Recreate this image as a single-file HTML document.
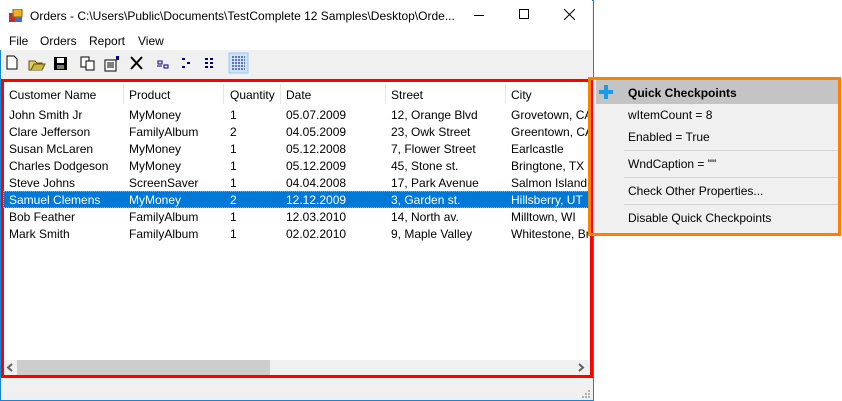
<!DOCTYPE html>
<html><head><style>
*{margin:0;padding:0;box-sizing:border-box}
body{width:842px;height:401px;background:#fff;font-family:"Liberation Sans",sans-serif;font-size:12px;color:#000;position:relative;overflow:hidden}
.abs{position:absolute}
.win{left:0;top:0;width:594px;height:401px;border:1px solid #1883d7;background:#f0f0f0}
.title{left:0;top:0;width:592px;height:50px;background:#fff}
.t{white-space:nowrap}
.row{position:absolute;left:3px;width:586px;height:17px}
.row span{position:absolute;top:2px;white-space:nowrap}
.sel{background:#0078d7;color:#fff;outline:1px dotted #e0a040;outline-offset:-1px}
</style></head><body>
<div class="abs win"></div>
<div class="abs title"></div>
<svg class="abs" style="left:9px;top:9px" width="14" height="14"><rect x="0" y="4" width="6" height="9" fill="#c03030"/><rect x="4" y="0" width="9" height="8" fill="#f0b020" stroke="#806010"/><rect x="6" y="8" width="7" height="5" fill="#4070d0"/></svg>
<div class="abs t" style="left:30px;top:9px">Orders - C:\Users\Public\Documents\TestComplete 12 Samples\Desktop\Orde...</div>
<div class="abs" style="left:474px;top:15px;width:10px;height:1px;background:#000"></div>
<div class="abs" style="left:519px;top:9px;width:10px;height:10px;border:1px solid #000"></div>
<svg class="abs" style="left:564px;top:9px" width="11" height="11"><path d="M0 0L11 11M11 0L0 11" stroke="#000"/></svg>
<div class="abs t" style="left:9px;top:34px">File</div>
<div class="abs t" style="left:40px;top:34px">Orders</div>
<div class="abs t" style="left:89px;top:34px">Report</div>
<div class="abs t" style="left:138px;top:34px">View</div>
<svg class="abs" style="left:0;top:52px" width="260" height="26">
<path d="M7 4h7l3 3v10H7z" fill="#fff" stroke="#000"/>
<path d="M29 9h6l2 2h5v7H29z" fill="#e0d060" stroke="#605010"/><path d="M31 18l3-6h11l-3 6" fill="#c8b840" stroke="#605010"/>
<rect x="54" y="5" width="13" height="13" fill="#000"/><rect x="57" y="6" width="7" height="5" fill="#fff"/><rect x="57" y="13" width="7" height="4" fill="#808060"/>
<rect x="81" y="5" width="8" height="10" fill="#fff" stroke="#000"/><rect x="86" y="9" width="8" height="9" fill="#fff" stroke="#000"/>
<rect x="105" y="8" width="11" height="11" fill="#fff" stroke="#000"/><path d="M107 11h7M107 13h7M107 15h7" stroke="#000"/><rect x="116" y="4" width="3" height="4" fill="#000080"/>
<path d="M131 5l11 12M142 5l-11 12" stroke="#000" stroke-width="2"/>
<path d="M158 9h4v3h-4zM164 13h4v3h-4z" fill="none" stroke="#000080"/><path d="M157 14h5" stroke="#000080"/>
<path d="M182 7h3M187 11h3M182 15h3" stroke="#000080" stroke-width="2"/>
<path d="M205 7h3M210 7h3M205 11h3M210 11h3M205 15h3M210 15h3" stroke="#000080" stroke-width="2"/>
<rect x="229" y="1" width="19" height="20" fill="#cce4f7" stroke="#99c9ef"/>
<path d="M232 5h13M232 8h13M232 11h13M232 14h13M232 17h13" stroke="#000080" stroke-dasharray="2 1"/>
</svg>
<div class="abs" style="left:1px;top:79px;width:592px;height:299px;border:3px solid #f00;background:#fff"></div>
<div class="abs" style="left:123px;top:84px;width:1px;height:20px;background:#e5e5e5"></div>
<div class="abs" style="left:223px;top:84px;width:1px;height:20px;background:#e5e5e5"></div>
<div class="abs" style="left:280px;top:84px;width:1px;height:20px;background:#e5e5e5"></div>
<div class="abs" style="left:385px;top:84px;width:1px;height:20px;background:#e5e5e5"></div>
<div class="abs" style="left:505px;top:84px;width:1px;height:20px;background:#e5e5e5"></div>
<div class="row" style="top:86px"><span style="left:6px">Customer Name</span><span style="left:126px">Product</span><span style="left:227px">Quantity</span><span style="left:283px">Date</span><span style="left:388px">Street</span><span style="left:508px">City</span></div>
<div class="row" style="top:106px"><span style="left:6px">John Smith Jr</span><span style="left:126px">MyMoney</span><span style="left:227px">1</span><span style="left:283px">05.07.2009</span><span style="left:388px">12, Orange Blvd</span><span style="left:508px">Grovetown, CA</span></div>
<div class="row" style="top:123px"><span style="left:6px">Clare Jefferson</span><span style="left:126px">FamilyAlbum</span><span style="left:227px">2</span><span style="left:283px">04.05.2009</span><span style="left:388px">23, Owk Street</span><span style="left:508px">Greentown, CA</span></div>
<div class="row" style="top:140px"><span style="left:6px">Susan McLaren</span><span style="left:126px">MyMoney</span><span style="left:227px">1</span><span style="left:283px">05.12.2008</span><span style="left:388px">7, Flower Street</span><span style="left:508px">Earlcastle</span></div>
<div class="row" style="top:157px"><span style="left:6px">Charles Dodgeson</span><span style="left:126px">MyMoney</span><span style="left:227px">1</span><span style="left:283px">05.12.2009</span><span style="left:388px">45, Stone st.</span><span style="left:508px">Bringtone, TX</span></div>
<div class="row" style="top:174px"><span style="left:6px">Steve Johns</span><span style="left:126px">ScreenSaver</span><span style="left:227px">1</span><span style="left:283px">04.04.2008</span><span style="left:388px">17, Park Avenue</span><span style="left:508px">Salmon Island</span></div>
<div class="row sel" style="top:191px"><span style="left:6px">Samuel Clemens</span><span style="left:126px">MyMoney</span><span style="left:227px">2</span><span style="left:283px">12.12.2009</span><span style="left:388px">3, Garden st.</span><span style="left:508px">Hillsberry, UT</span></div>
<div class="row" style="top:208px"><span style="left:6px">Bob Feather</span><span style="left:126px">FamilyAlbum</span><span style="left:227px">1</span><span style="left:283px">12.03.2010</span><span style="left:388px">14, North av.</span><span style="left:508px">Milltown, WI</span></div>
<div class="row" style="top:225px;overflow:hidden"><span style="left:6px">Mark Smith</span><span style="left:126px">FamilyAlbum</span><span style="left:227px">1</span><span style="left:283px">02.02.2010</span><span style="left:388px">9, Maple Valley</span><span style="left:508px">Whitestone, Britain</span></div>
<div class="abs" style="left:4px;top:360px;width:585px;height:15px;background:#f0f0f0"></div>
<div class="abs" style="left:17px;top:360px;width:253px;height:15px;background:#cdcdcd"></div>
<svg class="abs" style="left:6px;top:363px" width="8" height="9"><path d="M6 1L2 4.5L6 8" stroke="#606060" stroke-width="2" fill="none"/></svg>
<svg class="abs" style="left:577px;top:363px" width="8" height="9"><path d="M2 1L6 4.5L2 8" stroke="#606060" stroke-width="2" fill="none"/></svg>
<svg class="abs" style="left:581px;top:389px" width="10" height="10" fill="#b0b0b0"><rect x="7" y="1" width="2" height="2"/><rect x="4" y="4" width="2" height="2"/><rect x="7" y="4" width="2" height="2"/><rect x="1" y="7" width="2" height="2"/><rect x="4" y="7" width="2" height="2"/><rect x="7" y="7" width="2" height="2"/></svg>
<div class="abs" style="left:588px;top:77px;width:253px;height:159px;border:3px solid #ff7f00;background:#f0f0f0"></div>
<div class="abs" style="left:591px;top:80px;width:2px;height:153px;background:#f00"></div>
<div class="abs" style="left:596px;top:80px;width:242px;height:24px;background:#c4c4c4"></div>
<svg class="abs" style="left:598px;top:84px" width="16" height="16"><path d="M8 1v14M1 8h14" stroke="#1a9be8" stroke-width="4"/></svg>
<div class="abs t" style="left:628px;top:86px;font-weight:bold">Quick Checkpoints</div>
<div class="abs t" style="left:628px;top:108px">wItemCount = 8</div>
<div class="abs t" style="left:628px;top:130px">Enabled = True</div>
<div class="abs" style="left:624px;top:150px;width:214px;height:1px;background:#d4d4d4"></div>
<div class="abs t" style="left:628px;top:157px">WndCaption = ""</div>
<div class="abs" style="left:624px;top:177px;width:214px;height:1px;background:#d4d4d4"></div>
<div class="abs t" style="left:628px;top:184px">Check Other Properties...</div>
<div class="abs" style="left:624px;top:204px;width:214px;height:1px;background:#d4d4d4"></div>
<div class="abs t" style="left:628px;top:211px">Disable Quick Checkpoints</div>
</body></html>
